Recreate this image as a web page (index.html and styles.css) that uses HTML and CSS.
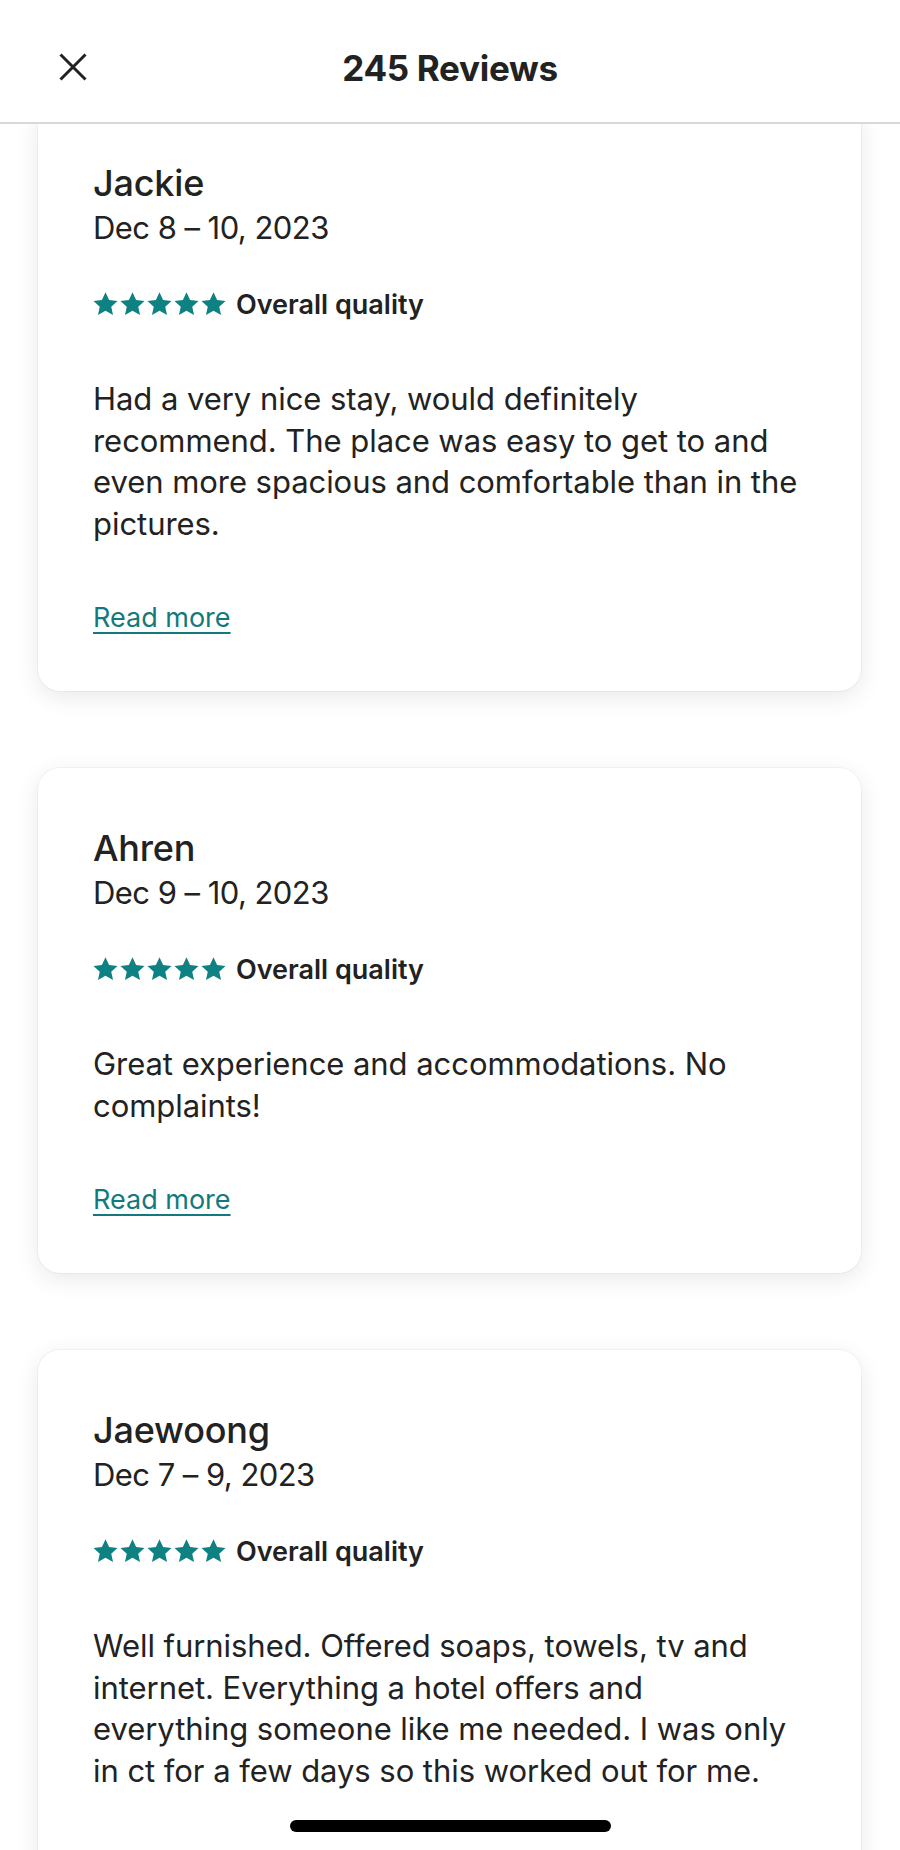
FILE: index.html
```html
<!DOCTYPE html>
<html lang="en">
<head>
<meta charset="utf-8">
<title>245 Reviews</title>
<link rel="stylesheet" href="styles.css">
</head>
<body>
<header class="topbar">
  <button class="close" aria-label="Close">
    <svg viewBox="0 0 28 28" width="28" height="28"><path d="M1.5 1.5 L26.5 26.5 M26.5 1.5 L1.5 26.5" stroke="#222" stroke-width="3" stroke-linecap="butt" fill="none"/></svg>
  </button>
  <h1 class="title">245 Reviews</h1>
  <span class="spacer"></span>
</header>

<main class="list">
  <article class="card">
    <h2 class="name">Jackie</h2>
    <p class="date">Dec 8 – 10, 2023</p>
    <div class="rating">
      <span class="stars">
        <svg viewBox="0 0 24 24"><path d="M12 1.2l3.2 6.9 7.5.8-5.6 5.1 1.6 7.4L12 17.6l-6.7 3.8 1.6-7.4-5.6-5.1 7.5-.8z"/></svg>
        <svg viewBox="0 0 24 24"><path d="M12 1.2l3.2 6.9 7.5.8-5.6 5.1 1.6 7.4L12 17.6l-6.7 3.8 1.6-7.4-5.6-5.1 7.5-.8z"/></svg>
        <svg viewBox="0 0 24 24"><path d="M12 1.2l3.2 6.9 7.5.8-5.6 5.1 1.6 7.4L12 17.6l-6.7 3.8 1.6-7.4-5.6-5.1 7.5-.8z"/></svg>
        <svg viewBox="0 0 24 24"><path d="M12 1.2l3.2 6.9 7.5.8-5.6 5.1 1.6 7.4L12 17.6l-6.7 3.8 1.6-7.4-5.6-5.1 7.5-.8z"/></svg>
        <svg viewBox="0 0 24 24"><path d="M12 1.2l3.2 6.9 7.5.8-5.6 5.1 1.6 7.4L12 17.6l-6.7 3.8 1.6-7.4-5.6-5.1 7.5-.8z"/></svg>
      </span>
      <span class="label">Overall quality</span>
    </div>
    <p class="text">Had a very nice stay, would definitely recommend. The place was easy to get to and even more spacious and comfortable than in the pictures.</p>
    <a class="more" href="#">Read more</a>
  </article>

  <article class="card">
    <h2 class="name">Ahren</h2>
    <p class="date">Dec 9 – 10, 2023</p>
    <div class="rating">
      <span class="stars">
        <svg viewBox="0 0 24 24"><path d="M12 1.2l3.2 6.9 7.5.8-5.6 5.1 1.6 7.4L12 17.6l-6.7 3.8 1.6-7.4-5.6-5.1 7.5-.8z"/></svg>
        <svg viewBox="0 0 24 24"><path d="M12 1.2l3.2 6.9 7.5.8-5.6 5.1 1.6 7.4L12 17.6l-6.7 3.8 1.6-7.4-5.6-5.1 7.5-.8z"/></svg>
        <svg viewBox="0 0 24 24"><path d="M12 1.2l3.2 6.9 7.5.8-5.6 5.1 1.6 7.4L12 17.6l-6.7 3.8 1.6-7.4-5.6-5.1 7.5-.8z"/></svg>
        <svg viewBox="0 0 24 24"><path d="M12 1.2l3.2 6.9 7.5.8-5.6 5.1 1.6 7.4L12 17.6l-6.7 3.8 1.6-7.4-5.6-5.1 7.5-.8z"/></svg>
        <svg viewBox="0 0 24 24"><path d="M12 1.2l3.2 6.9 7.5.8-5.6 5.1 1.6 7.4L12 17.6l-6.7 3.8 1.6-7.4-5.6-5.1 7.5-.8z"/></svg>
      </span>
      <span class="label">Overall quality</span>
    </div>
    <p class="text">Great experience and accommodations. No complaints!</p>
    <a class="more" href="#">Read more</a>
  </article>

  <article class="card card-last">
    <h2 class="name">Jaewoong</h2>
    <p class="date">Dec 7 – 9, 2023</p>
    <div class="rating">
      <span class="stars">
        <svg viewBox="0 0 24 24"><path d="M12 1.2l3.2 6.9 7.5.8-5.6 5.1 1.6 7.4L12 17.6l-6.7 3.8 1.6-7.4-5.6-5.1 7.5-.8z"/></svg>
        <svg viewBox="0 0 24 24"><path d="M12 1.2l3.2 6.9 7.5.8-5.6 5.1 1.6 7.4L12 17.6l-6.7 3.8 1.6-7.4-5.6-5.1 7.5-.8z"/></svg>
        <svg viewBox="0 0 24 24"><path d="M12 1.2l3.2 6.9 7.5.8-5.6 5.1 1.6 7.4L12 17.6l-6.7 3.8 1.6-7.4-5.6-5.1 7.5-.8z"/></svg>
        <svg viewBox="0 0 24 24"><path d="M12 1.2l3.2 6.9 7.5.8-5.6 5.1 1.6 7.4L12 17.6l-6.7 3.8 1.6-7.4-5.6-5.1 7.5-.8z"/></svg>
        <svg viewBox="0 0 24 24"><path d="M12 1.2l3.2 6.9 7.5.8-5.6 5.1 1.6 7.4L12 17.6l-6.7 3.8 1.6-7.4-5.6-5.1 7.5-.8z"/></svg>
      </span>
      <span class="label">Overall quality</span>
    </div>
    <p class="text">Well furnished. Offered soaps, towels, tv and internet. Everything a hotel offers and everything someone like me needed. I was only in ct for a few days so this worked out for me.</p>
  </article>
</main>

<div class="home-indicator"></div>
</body>
</html>
```

FILE: styles.css
```css
* {
  box-sizing: border-box;
}

html, body {
  margin: 0;
  padding: 0;
  background: #ffffff;
}

body {
  font-family: Inter, "Noto Sans", "Liberation Sans", sans-serif;
  color: #222222;
  height: 1850px;
  overflow: hidden;
}

.topbar {
  position: fixed;
  top: 0;
  left: 0;
  right: 0;
  height: 124px;
  padding-top: 14px;
  background: #ffffff;
  border-bottom: 2px solid #d9d9d9;
  display: grid;
  grid-template-columns: 1fr auto 1fr;
  align-items: center;
  z-index: 10;
}

.close {
  justify-self: start;
  margin-left: 59px;
  margin-top: -2px;
  padding: 0;
  border: 0;
  background: none;
  width: 28px;
  height: 28px;
  display: flex;
}

.title {
  margin: 0;
  font-size: 35px;
  font-weight: 700;
  letter-spacing: -0.3px;
  color: #222222;
  line-height: 44px;
}

.list {
  display: flex;
  flex-direction: column;
  gap: 77px;
  padding: 103px 39px 0 38px;
}

.card {
  background: #ffffff;
  border-radius: 22px;
  box-shadow: 0 0 0 1px rgba(0, 0, 0, 0.035), 0 6px 24px rgba(0, 0, 0, 0.09);
  padding: 58px 62px 53px 55px;
  display: flex;
  flex-direction: column;
  align-items: flex-start;
}

.card-last {
  min-height: 600px;
}

.name {
  margin: 0;
  font-size: 36px;
  font-weight: 500;
  line-height: 44px;
  letter-spacing: -0.2px;
}

.date {
  margin: 0;
  font-size: 31px;
  font-weight: 400;
  line-height: 46px;
  letter-spacing: -0.55px;
}

.rating {
  margin-top: 37px;
  height: 32px;
  display: flex;
  align-items: center;
  gap: 9px;
}

.stars {
  display: flex;
  gap: 0;
  margin-left: -1px;
}

.stars svg {
  width: 27px;
  height: 27px;
  fill: #0e8282;
}

.label {
  font-size: 27px;
  font-weight: 600;
  letter-spacing: 0;
}

.text {
  margin: 58px 0 0 0;
  font-size: 31px;
  line-height: 41.5px;
  font-weight: 400;
  letter-spacing: -0.05px;
}

.more {
  margin-top: 54px;
  font-size: 27px;
  line-height: 40px;
  color: #127a7c;
  text-decoration: underline;
  text-decoration-thickness: 2px;
  text-underline-offset: 5px;
}

.home-indicator {
  position: fixed;
  left: 290px;
  bottom: 18px;
  width: 321px;
  height: 12px;
  border-radius: 6px;
  background: #000000;
  z-index: 20;
}
```
